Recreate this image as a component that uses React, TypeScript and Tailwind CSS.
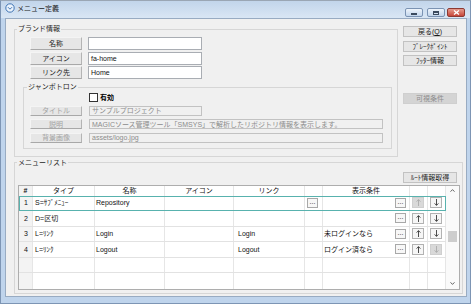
import React from "react";

const FONT = "font-['Liberation_Sans','Noto_Sans_CJK_JP',sans-serif]";

function LabelBtn({ children, disabled = false, tall = true }: { children: React.ReactNode; disabled?: boolean; tall?: boolean }) {
  return (
    <div
      className={`${tall ? "h-[13px]" : "h-[10px]"} w-[52px] shrink-0 flex items-center justify-center text-[7px] leading-none border border-t-[#f4f4f4] border-l-[#f4f4f4] border-r-[#b4b4b4] border-b-[#a8a8a8] bg-[#e6e6e6] ${disabled ? "text-[#a3a3a3]" : "text-[#1a1a1a]"}`}
    >
      {children}
    </div>
  );
}

function Field({ value, w, disabled = false, tall = true }: { value: string; w: string; disabled?: boolean; tall?: boolean }) {
  return (
    <div
      className={`${tall ? "h-[13px]" : "h-[10px]"} ${w} flex items-center px-[2px] text-[7px] leading-none whitespace-nowrap overflow-hidden border ${disabled ? "bg-[#f0f0f0] border-[#c2c2c2] text-[#8c8c8c]" : "bg-white border-[#a9adb3] text-[#111]"}`}
    >
      {value}
    </div>
  );
}

function SideBtn({ children, disabled = false }: { children: React.ReactNode; disabled?: boolean }) {
  return (
    <div
      className={`h-[11px] w-[54px] flex items-center justify-center text-[7px] leading-none border ${disabled ? "bg-[#d4d4d4] border-[#cfcfcf] text-[#8d8d8d]" : "bg-[#e6e6e6] border-[#c2c2c2] text-[#1a1a1a]"}`}
    >
      {children}
    </div>
  );
}

function Dots() {
  return (
    <div className="h-[10px] w-[11px] shrink-0 flex items-end justify-center pb-[2px] border border-[#a8a8a8] bg-[#f7f7f7] text-[7px] leading-none text-[#222]">
      ...
    </div>
  );
}

function Arrow({ up, disabled }: { up: boolean; disabled: boolean }) {
  const c = disabled ? "#a6a6a6" : "#222";
  return (
    <div
      className={`h-[11px] w-[12px] ml-[2px] flex items-center justify-center border ${disabled ? "bg-[#d9d9d9] border-[#cfcfcf]" : "bg-[#f6f6f6] border-[#b2b2b2]"}`}
    >
      <svg width="5" height="7" viewBox="0 0 5 7">
        {up ? (
          <path d="M2.5 7 L2.5 0.8 M0.6 2.6 L2.5 0.6 L4.4 2.6" fill="none" stroke={c} strokeWidth="0.8" />
        ) : (
          <path d="M2.5 0 L2.5 6.2 M0.6 4.4 L2.5 6.4 L4.4 4.4" fill="none" stroke={c} strokeWidth="0.8" />
        )}
      </svg>
    </div>
  );
}

type Row = {
  n: string;
  type: string;
  name: string;
  link: string;
  linkBtn: boolean;
  cond: string;
  btns: boolean;
  up: boolean;
  down: boolean;
  sel: boolean;
};

const rows: Row[] = [
  { n: "1", type: "S=ｻﾌﾞﾒﾆｭｰ", name: "Repository", link: "", linkBtn: true, cond: "", btns: true, up: false, down: true, sel: true },
  { n: "2", type: "D=区切", name: "", link: "", linkBtn: false, cond: "", btns: true, up: true, down: true, sel: false },
  { n: "3", type: "L=ﾘﾝｸ", name: "Login", link: "Login", linkBtn: false, cond: "未ログインなら", btns: true, up: true, down: true, sel: false },
  { n: "4", type: "L=ﾘﾝｸ", name: "Logout", link: "Logout", linkBtn: false, cond: "ログイン済なら", btns: true, up: true, down: false, sel: false },
  { n: "", type: "", name: "", link: "", linkBtn: false, cond: "", btns: false, up: true, down: true, sel: false },
  { n: "", type: "", name: "", link: "", linkBtn: false, cond: "", btns: false, up: true, down: true, sel: false },
];

const COLS = "grid grid-cols-[14px_62px_70px_69px_71px_18px_87px_18px_18px]";
const CELL = "border-r border-[#e6e6e6] flex items-center overflow-hidden whitespace-nowrap";

export default function App() {
  return (
    <div className={`${FONT} w-[471px] h-[304px] flex flex-col bg-[#bfd4ec] border border-[#7d95b4] border-t-[#9aa6b4]`}>
      {/* title bar */}
      <div className="h-[17px] shrink-0 flex items-start bg-gradient-to-b from-[#c2d5eb] to-[#d9e6f4]">
        <div className="ml-[4px] mt-[2px] flex items-center">
          <svg width="10" height="10" viewBox="0 0 10 10">
            <circle cx="5" cy="5" r="4.2" fill="#eaf2fb" stroke="#2f68ad" strokeWidth="0.9" />
            <path d="M3 4.2 L5 6.2 L7 4.2" fill="none" stroke="#2f68ad" strokeWidth="0.9" />
          </svg>
          <span className="ml-[2px] text-[7px] leading-none text-[#1b1b1b]">メニュー定義</span>
        </div>
        <div className="ml-auto mr-[5px] mt-[7px] flex">
          <div className="h-[9px] w-[18px] rounded-[2px] border border-[#7b93b3] bg-gradient-to-b from-[#eef4fb] to-[#c3d6ec] flex items-center justify-center">
            <div className="w-[6px] h-[2px] border border-[#3b4a5e] mt-[2px]" />
          </div>
          <div className="ml-[4px] h-[9px] w-[18px] rounded-[2px] border border-[#7b93b3] bg-gradient-to-b from-[#eef4fb] to-[#c3d6ec] flex items-center justify-center">
            <div className="w-[6px] h-[4px] border border-[#3b4a5e] border-t-2" />
          </div>
          <div className="ml-[2px] h-[9px] w-[18px] rounded-[2px] border border-[#8d3a33] bg-gradient-to-b from-[#e49a8d] to-[#c5443a] flex items-center justify-center">
            <svg width="7" height="5" viewBox="0 0 7 5">
              <path d="M1 0.5 L6 4.5 M6 0.5 L1 4.5" stroke="#fff" strokeWidth="1.3" />
            </svg>
          </div>
        </div>
      </div>

      {/* frame + client */}
      <div className="flex-1 flex pl-[4px] pr-[3px] pb-[6px]">
        <div className="flex-1 flex flex-col bg-[#f0f0f0] border border-[#98abc2]">
          {/* top section */}
          <div className="flex pl-[8px]">
            <fieldset className="mt-[5px] w-[384px] border border-[#d6d6d6] p-0 m-0">
              <legend className="ml-[2px] px-[1px] text-[7px] leading-[10px] text-[#1e1e1e]">ブランド情報</legend>
              <div className="pl-[8px] pt-[3px] pb-[7px]">
                <div className="pl-[7px] flex flex-col gap-[1.5px]">
                  <div className="flex gap-[6px]">
                    <LabelBtn>名称</LabelBtn>
                    <Field value="" w="w-[114px]" />
                  </div>
                  <div className="flex gap-[6px]">
                    <LabelBtn>アイコン</LabelBtn>
                    <Field value="fa-home" w="w-[114px]" />
                  </div>
                  <div className="flex gap-[6px]">
                    <LabelBtn>リンク先</LabelBtn>
                    <Field value="Home" w="w-[114px]" />
                  </div>
                </div>
                <fieldset className="mt-[3px] w-[369px] border border-[#d6d6d6] p-0 m-0">
                  <legend className="ml-[3px] px-[1px] text-[7px] leading-[10px] text-[#1e1e1e]">ジャンボトロン</legend>
                  <div className="pl-[6px] pb-[5px] flex flex-col gap-[3.5px]">
                    <div className="h-[10px] pl-[59px] flex items-center">
                      <div className="w-[9px] h-[9px] border border-[#333] bg-white" />
                      <span className="ml-[1px] px-[1px] text-[7px] leading-none font-bold text-black">有効</span>
                    </div>
                    <div className="flex gap-[7px]">
                      <LabelBtn disabled tall={false}>タイトル</LabelBtn>
                      <Field value="サンプルプロジェクト" w="w-[113px]" disabled tall={false} />
                    </div>
                    <div className="flex gap-[7px]">
                      <LabelBtn disabled tall={false}>説明</LabelBtn>
                      <Field value="MAGICソース管理ツール「SMSYS」で解析したリポジトリ情報を表示します。" w="w-[294px]" disabled tall={false} />
                    </div>
                    <div className="flex gap-[7px]">
                      <LabelBtn disabled tall={false}>背景画像</LabelBtn>
                      <Field value="assets/logo.jpg" w="w-[294px]" disabled tall={false} />
                    </div>
                  </div>
                </fieldset>
              </div>
            </fieldset>

            <div className="ml-[5px] mt-[7px] flex flex-col gap-[3.5px]">
              <SideBtn>戻る(<span className="underline">Q</span>)</SideBtn>
              <SideBtn>ﾌﾞﾚｰｸﾎﾟｲﾝﾄ</SideBtn>
              <SideBtn>ﾌｯﾀｰ情報</SideBtn>
              <div className="mt-[23px]">
                <SideBtn disabled>可視条件</SideBtn>
              </div>
            </div>
          </div>

          {/* menu list */}
          <fieldset className="ml-[8px] mt-[1px] w-[449px] border border-[#d6d6d6] p-0 m-0">
            <legend className="ml-[2px] px-[1px] text-[7px] leading-[10px] text-[#1e1e1e]">メニューリスト</legend>
            <div className="pl-[3px] pr-[2px] pt-[4px] pb-[3px] flex flex-col">
              <div className="flex justify-end pr-[3px]">
                <SideBtn>ﾙｰﾄ情報取得</SideBtn>
              </div>
              <div className="mt-[2px] w-[442px] h-[105px] flex border border-[#adadad] bg-white text-[7px] leading-none text-[#111]">
                <div className="w-[427px] flex flex-col">
                  <div className={`${COLS} h-[10px] shrink-0`}>
                    <div className={`${CELL} justify-center font-bold bg-[#f3f3f3]`}>#</div>
                    <div className={`${CELL} justify-center`}>タイプ</div>
                    <div className={`${CELL} justify-center`}>名称</div>
                    <div className={`${CELL} justify-center`}>アイコン</div>
                    <div className={`${CELL} justify-center`}>リンク</div>
                    <div className={CELL} />
                    <div className={`${CELL} justify-center`}>表示条件</div>
                    <div className={CELL} />
                    <div className={CELL} />
                  </div>
                  {rows.map((r, i) => (
                    <div
                      key={i}
                      className={`${COLS} h-[15.5px] shrink-0 ${i < rows.length - 1 ? "border-b border-[#e2e2e2]" : ""} ${r.sel ? "outline-1 -outline-offset-1 outline-[#58b2ae]" : ""}`}
                    >
                      <div className={`${CELL} justify-end pr-[4px] bg-[#f3f3f3]`}>{r.n}</div>
                      <div className={`${CELL} pl-[2px]`}>{r.type}</div>
                      <div className={`${CELL} pl-[1px]`}>{r.name}</div>
                      <div className={CELL} />
                      <div className={`${CELL} pl-[4px]`}>{r.link}</div>
                      <div className={`${CELL} pl-[2px]`}>{r.linkBtn ? <Dots /> : null}</div>
                      <div className={`${CELL} justify-between pl-[1px] pr-[3px]`}>
                        <span>{r.cond}</span>
                        {r.btns ? <Dots /> : null}
                      </div>
                      <div className={CELL}>{r.btns ? <Arrow up disabled={!r.up} /> : null}</div>
                      <div className={CELL}>{r.btns ? <Arrow up={false} disabled={!r.down} /> : null}</div>
                    </div>
                  ))}
                </div>
                {/* scrollbar */}
                <div className="w-[13px] flex flex-col bg-[#fafafa]">
                  <div className="h-[10px] flex items-center justify-center">
                    <svg width="5" height="3" viewBox="0 0 5 3">
                      <path d="M0.5 2.7 L2.5 0.6 L4.5 2.7" fill="none" stroke="#555" strokeWidth="0.9" />
                    </svg>
                  </div>
                  <div className="flex-1 pt-[35px] pl-[2px]">
                    <div className="w-[9px] h-[11px] bg-[#cdcdcd]" />
                  </div>
                  <div className="h-[10px] flex items-center justify-center">
                    <svg width="5" height="3" viewBox="0 0 5 3">
                      <path d="M0.5 0.3 L2.5 2.4 L4.5 0.3" fill="none" stroke="#555" strokeWidth="0.9" />
                    </svg>
                  </div>
                </div>
              </div>
            </div>
          </fieldset>
        </div>
      </div>
    </div>
  );
}
